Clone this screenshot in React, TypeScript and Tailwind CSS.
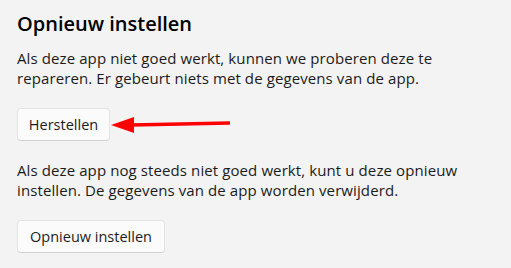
import React from 'react';

const font = { fontFamily: '"Open Sans", "Noto Sans", sans-serif' };

export default function App() {
  return (
    <div className="relative w-[511px] h-[268px] bg-[#f3f3f3] text-[#1b1b1b] overflow-hidden" style={font}>
      <div className="pl-[17px] pt-[10px] flex flex-col items-start">
        <h2 className="text-[20px] leading-[28px] font-semibold text-black">Opnieuw instellen</h2>
        <p className="mt-[10px] text-[15px] leading-[20px] tracking-[0.1px]">
          Als deze app niet goed werkt, kunnen we proberen deze te
          <br />
          repareren. Er gebeurt niets met de gegevens van de app.
        </p>
        <button className="mt-[20px] w-[93px] h-[33px] rounded-[4px] border border-[#e3e3e3] border-b-[#d0d0d0] bg-[#fbfbfb] text-[14.5px] text-[#1b1b1b]">
          Herstellen
        </button>
        <p className="mt-[19px] text-[15px] leading-[20px] tracking-[0.1px]">
          Als deze app nog steeds niet goed werkt, kunt u deze opnieuw
          <br />
          instellen. De gegevens van de app worden verwijderd.
        </p>
        <button className="mt-[20px] w-[148px] h-[33px] rounded-[4px] border border-[#e3e3e3] border-b-[#d0d0d0] bg-[#fbfbfb] text-[14.5px] text-[#1b1b1b]">
          Opnieuw instellen
        </button>
      </div>

      {/* annotation arrow */}
      <svg className="absolute left-0 top-0" width="511" height="268" viewBox="0 0 511 268">
        <line x1="131" y1="125" x2="230" y2="123" stroke="#ff0000" strokeWidth="3.5" />
        <polygon points="111,125 134,117 134,133" fill="#ff0000" />
      </svg>
    </div>
  );
}
